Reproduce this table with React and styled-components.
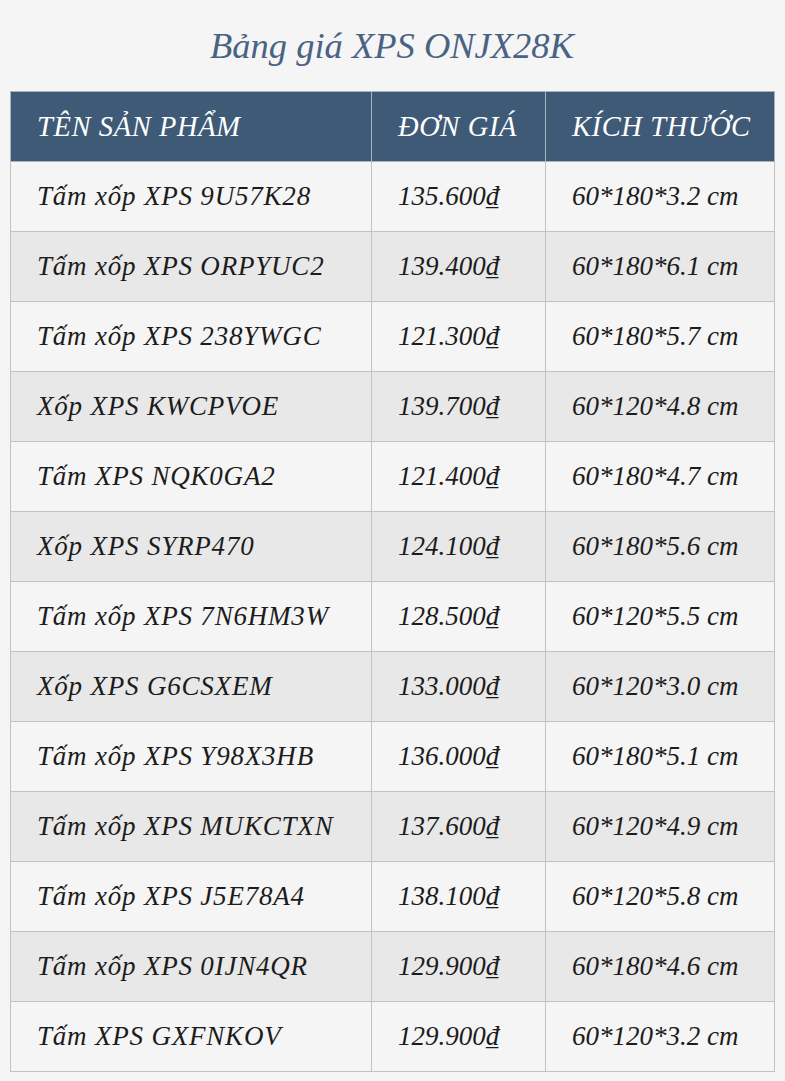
import React from 'react';
import styled, { createGlobalStyle } from 'styled-components';

const GlobalStyle = createGlobalStyle`
  html, body {
    margin: 0;
    padding: 0;
    background: #f5f5f5;
  }
  body {
    font-family: "Liberation Serif", "DejaVu Serif", serif;
  }
`;

const Page = styled.div`
  width: 785px;
  padding: 23px 11px 10px 10px;
  box-sizing: border-box;
`;

const Title = styled.h2`
  margin: 0 0 23px 0;
  text-align: center;
  font-style: italic;
  font-weight: normal;
  font-size: 36.5px;
  line-height: 45px;
  color: #4a6283;
`;

const Table = styled.table`
  width: 100%;
  table-layout: fixed;
  border-collapse: collapse;
  border: 1px solid #c2c2c2;
  font-style: italic;
`;

const HeadCell = styled.th`
  height: 70px;
  box-sizing: border-box;
  padding: 0 20px 0 26px;
  background: #3e5a77;
  color: #ffffff;
  font-weight: normal;
  font-size: 28.5px;
  letter-spacing: 0.6px;
  white-space: nowrap;
  text-align: left;
  border: 1px solid #a9b4c1;
  width: ${(p) => p.$w}px;
`;

const Row = styled.tr`
  background: ${(p) => (p.$alt ? '#e8e8e8' : '#f5f5f5')};
`;

const Cell = styled.td`
  height: 70px;
  box-sizing: border-box;
  padding: 0 20px 0 26px;
  color: #1c1c1c;
  font-size: 27px;
  white-space: nowrap;
  letter-spacing: ${(p) => (p.$name ? '0.8px' : '0')};
  border: 1px solid #c2c2c2;
`;

const rows = [
  ['Tấm xốp XPS 9U57K28', '135.600₫', '60*180*3.2 cm'],
  ['Tấm xốp XPS ORPYUC2', '139.400₫', '60*180*6.1 cm'],
  ['Tấm xốp XPS 238YWGC', '121.300₫', '60*180*5.7 cm'],
  ['Xốp XPS KWCPVOE', '139.700₫', '60*120*4.8 cm'],
  ['Tấm XPS NQK0GA2', '121.400₫', '60*180*4.7 cm'],
  ['Xốp XPS SYRP470', '124.100₫', '60*180*5.6 cm'],
  ['Tấm xốp XPS 7N6HM3W', '128.500₫', '60*120*5.5 cm'],
  ['Xốp XPS G6CSXEM', '133.000₫', '60*120*3.0 cm'],
  ['Tấm xốp XPS Y98X3HB', '136.000₫', '60*180*5.1 cm'],
  ['Tấm xốp XPS MUKCTXN', '137.600₫', '60*120*4.9 cm'],
  ['Tấm xốp XPS J5E78A4', '138.100₫', '60*120*5.8 cm'],
  ['Tấm xốp XPS 0IJN4QR', '129.900₫', '60*180*4.6 cm'],
  ['Tấm XPS GXFNKOV', '129.900₫', '60*120*3.2 cm'],
];

export default function App() {
  return (
    <Page>
      <GlobalStyle />
      <Title>Bảng giá XPS ONJX28K</Title>
      <Table>
        <thead>
          <tr>
            <HeadCell $w={361}>TÊN SẢN PHẨM</HeadCell>
            <HeadCell $w={174}>ĐƠN GIÁ</HeadCell>
            <HeadCell $w={229}>KÍCH THƯỚC</HeadCell>
          </tr>
        </thead>
        <tbody>
          {rows.map((r, i) => (
            <Row key={i} $alt={i % 2 === 1}>
              <Cell $name>{r[0]}</Cell>
              <Cell>{r[1]}</Cell>
              <Cell>{r[2]}</Cell>
            </Row>
          ))}
        </tbody>
      </Table>
    </Page>
  );
}
